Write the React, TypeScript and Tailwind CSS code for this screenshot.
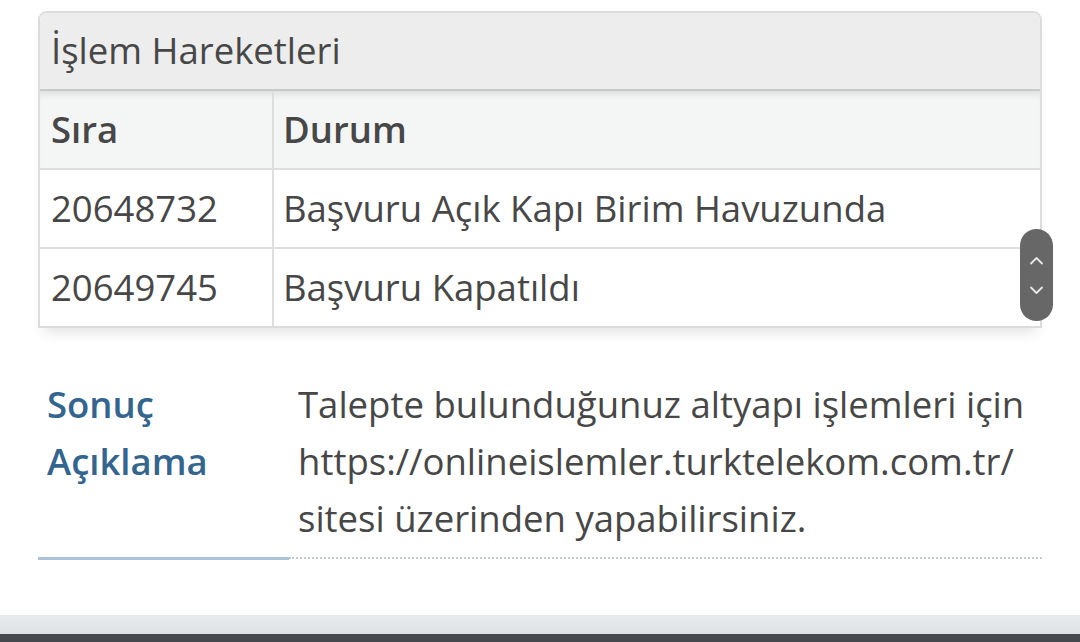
const rows = [
  { no: "20648732", status: "Başvuru Açık Kapı Birim Havuzunda" },
  { no: "20649745", status: "Başvuru Kapatıldı" },
];

function Chevron({ dir }: { dir: "up" | "down" }) {
  return (
    <svg width="15" height="9" viewBox="0 0 15 9" fill="none">
      <path
        d={dir === "up" ? "M2 7.5 7.5 2 13 7.5" : "M2 1.5 7.5 7 13 1.5"}
        stroke="#e8e8e8"
        strokeWidth="1.8"
        strokeLinecap="round"
        strokeLinejoin="round"
      />
    </svg>
  );
}

export default function App() {
  return (
    <div
      className="relative w-[1080px] h-[642px] bg-white overflow-hidden flex flex-col text-[#474747]"
      style={{ fontFamily: '"Open Sans", "Noto Sans", sans-serif' }}
    >
      <div className="flex-1 px-[38px] pt-[11px]">
        {/* panel */}
        <div className="w-[1004px] border-2 border-[#dcdcdc] rounded-t-[9px] shadow-[0_10px_14px_-6px_rgba(0,0,0,0.12)]">
          <div className="bg-[#ededed] rounded-t-[8px] border-b-2 border-[#c9c9c9] px-[11px] pt-[9px] pb-[10px] text-[36.5px] leading-[57px]">
            İşlem Hareketleri
          </div>
          <table className="w-full border-collapse text-[36.5px] leading-[57px]">
            <thead>
              <tr className="bg-[#f4f5f5] shadow-[inset_0_8px_8px_-6px_rgba(0,0,0,0.12)]">
                <th className="w-[233px] text-left font-semibold px-[11px] py-[10px] border-r-2 border-b-2 border-[#dedede]">
                  Sıra
                </th>
                <th className="text-left font-semibold px-[9px] py-[10px] border-b-2 border-[#dedede]">
                  Durum
                </th>
              </tr>
            </thead>
            <tbody>
              {rows.map((r, i) => (
                <tr key={r.no}>
                  <td
                    className={
                      "px-[11px] py-[10px] border-r-2 border-[#dedede] " +
                      (i < rows.length - 1 ? "border-b-2" : "")
                    }
                  >
                    {r.no}
                  </td>
                  <td
                    className={
                      "px-[9px] py-[10px] border-[#dedede] " +
                      (i < rows.length - 1 ? "border-b-2" : "")
                    }
                  >
                    {r.status}
                  </td>
                </tr>
              ))}
            </tbody>
          </table>
        </div>

        {/* result */}
        <div className="mt-[48px] flex w-[1004px] text-[36.5px] leading-[57px]">
          <div className="w-[251px] shrink-0 pl-[9px] pb-[10px] border-b-[3px] border-[#abc3d6] font-semibold text-[#33658f]">
            Sonuç
            <br />
            Açıklama
          </div>
          <div className="flex-1 pl-[9px] pb-[10px] border-b-2 border-dotted border-[#c3cacd] mb-[1px]">
            Talepte bulunduğunuz altyapı işlemleri için
            <br />
            https://onlineislemler.turktelekom.com.tr/
            <br />
            sitesi üzerinden yapabilirsiniz.
          </div>
        </div>
      </div>

      <div className="h-[19px] bg-gradient-to-b from-[#e9ecee] to-[#dde1e4]" />
      <div className="h-[8px] bg-[#45494d]" />

      {/* floating scroll control */}
      <div className="absolute left-[1020px] top-[229px] w-[33px] h-[92px] rounded-full bg-[#676767] flex flex-col items-center justify-center gap-[21px]">
        <Chevron dir="up" />
        <Chevron dir="down" />
      </div>
    </div>
  );
}
